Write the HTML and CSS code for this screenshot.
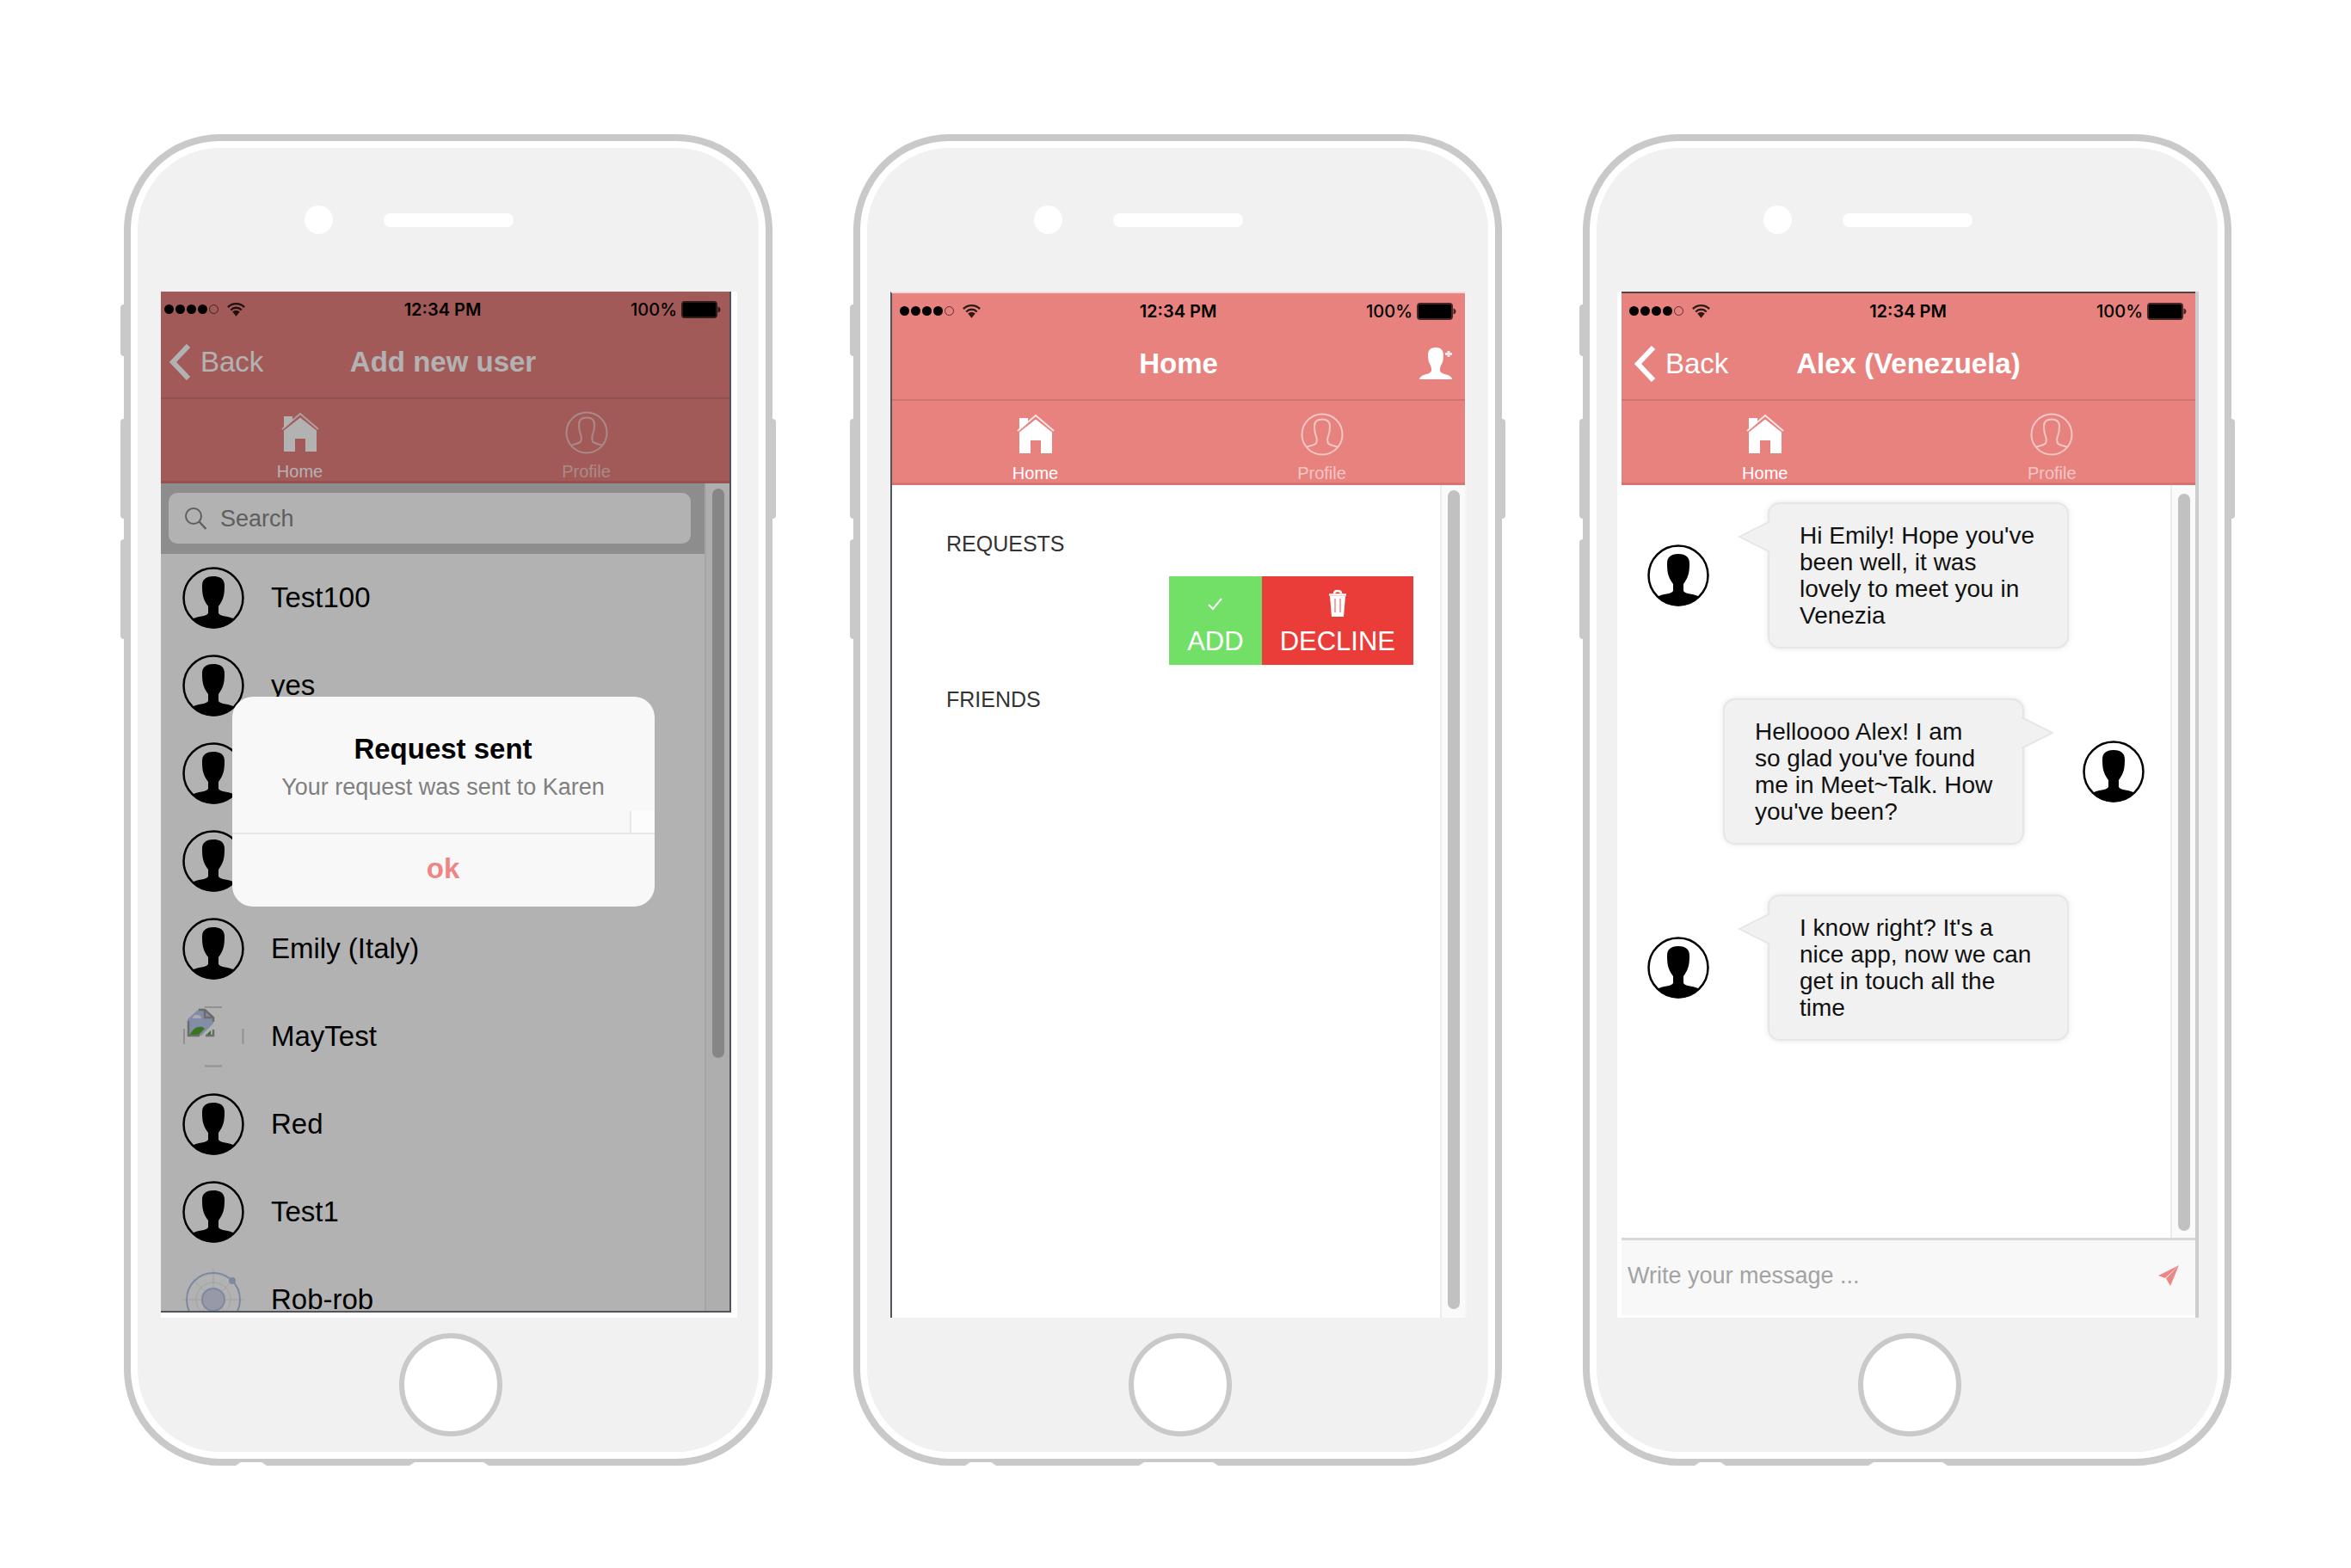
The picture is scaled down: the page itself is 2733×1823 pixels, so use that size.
FILE: index.html
```html
<!DOCTYPE html>
<html lang="en">
<head>
<meta charset="utf-8">
<title>Meet~Talk</title>
<link rel="stylesheet" href="styles.css">
</head>
<body>
<svg class="sprite" aria-hidden="true">
  <symbol id="wifi" viewBox="0 0 24 20">
    <path d="M2 7a14 14 0 0 1 20 0M5.500 10.500a9 9 0 0 1 13 0" fill="none" stroke="currentColor" stroke-width="2.500"/>
    <path d="M7.500 12.500a6.500 6.500 0 0 1 9 0L12 18z" fill="currentColor"/>
  </symbol>
  <symbol id="battery" viewBox="0 0 46 20">
    <rect x="1" y="1" width="40" height="18" rx="3" fill="none" stroke="currentColor" stroke-width="2" opacity=".7"/>
    <rect x="2" y="2" width="38" height="16" rx="1" fill="currentColor"/>
    <path d="M42.500 6.500q3 1 3 3.500t-3 3.500z" fill="currentColor" opacity=".7"/>
  </symbol>
  <symbol id="chevron" viewBox="0 0 26 42">
    <path d="M23 2 5 21l18 19" fill="none" stroke="currentColor" stroke-width="6"/>
  </symbol>
  <symbol id="home" viewBox="0 0 50 50">
    <path d="M6 6h10v5l-10 9z" fill="currentColor"/>
    <path d="M4 21 25 3l21 18" fill="none" stroke="currentColor" stroke-width="2" opacity=".8"/>
    <path d="M6 22.500 25 7.500l19 15V47H31V32H19v15H6z" fill="currentColor"/>
  </symbol>
  <symbol id="profile" viewBox="0 0 50 50">
    <g fill="none" stroke="currentColor" stroke-width="2">
      <circle cx="25" cy="25" r="23.500"/>
      <path d="M7 39.500c4-1 9-2 11-4 1-3 1-6 0-8-2-5-2-9-2-12 0-6 4-8 9-8s9 2 9 8c0 3 0 7-2 12-1 2-1 5 0 8 2 2 7 3 11 4"/>
    </g>
  </symbol>
  <symbol id="user-add" viewBox="0 0 40 40">
    <path d="M20 1c-7 0-9 4-9 9s1 9 3 12c1 2 1 4 1 6-1 4-8 4-11 6-2 1-3 3-3 4h38c0-1-1-3-3-4-3-2-10-2-11-6 0-2 0-4 1-6 2-3 3-7 3-12s-2-9-9-9z" fill="currentColor"/>
    <path d="M35 5v7M31 8.500h8" stroke="currentColor" stroke-width="3" fill="none" opacity=".8"/>
  </symbol>
  <symbol id="avatar" viewBox="0 0 72 72">
    <circle cx="36" cy="36" r="34.500" fill="#fff" stroke="#000" stroke-width="2.500"/>
    <path d="M36 11c-9 0-13 4-13 11 0 10 1 16 7 24v8c-2 4-12 3-19 7a35 35 0 0 0 50 0c-7-4-17-3-19-7v-8c6-8 7-14 7-24 0-7-4-11-13-11z"/>
  </symbol>
  <symbol id="magnifier" viewBox="0 0 28 28">
    <circle cx="11" cy="11" r="9" fill="none" stroke="currentColor" stroke-width="2"/>
    <path d="m17.500 17.500 8 8.500" stroke="currentColor" stroke-width="2.500"/>
  </symbol>
  <symbol id="missing" viewBox="0 0 72 72">
    <path d="M26 2h20M26 70.500h20M2 27v18M70.500 27v18" fill="none" stroke="#d0d0d0" stroke-width="2"/>
    <path d="M6 35V16L18 5h8l10 11v5L22 35z" fill="#bccbec"/>
    <path d="M12 15q0-4 5-4t5 4z" fill="#f2f5fc"/>
    <path d="M8 35c4-8 9-11 15-10l3 2-8 8z" fill="#51a82f"/>
    <path d="m28 34 5-5v5z" fill="#51a82f"/>
    <path d="M7 18v17h13M27 35h9v-7M19 5h7l10 9v5M26 5v9h9" fill="none" stroke="#9b9b9b" stroke-width="2.500"/>
  </symbol>
  <symbol id="sketch" viewBox="0 0 72 72">
    <g fill="none" stroke="#a3a7b3" stroke-width="1" opacity=".25">
      <path d="M36 0v72M0 36h72M12 12l48 48M60 12 12 60"/><circle cx="36" cy="36" r="20"/>
    </g>
    <circle cx="36" cy="36" r="31" fill="none" stroke="#b3c5ea" stroke-width="2"/>
    <circle cx="36" cy="36" r="13" fill="#d9ddee" stroke="#b3c5ea" stroke-width="2"/>
    <circle cx="58" cy="14" r="4" fill="#b3c5ea"/>
  </symbol>
  <symbol id="check" viewBox="0 0 34 34">
    <path d="m9 18 5 5L24 11" fill="none" stroke="currentColor" stroke-width="2"/>
  </symbol>
  <symbol id="trash" viewBox="0 0 34 34">
    <path d="M13 5q0-3 4-3t4 3M7 6.500h20" fill="none" stroke="currentColor" stroke-width="2.500"/>
    <path d="M8 8h18l-2 24H10z" fill="currentColor"/>
    <path d="M14 11v16M20 11v16" stroke="#f6a3a1" stroke-width="2"/>
  </symbol>
  <symbol id="send" viewBox="0 0 26 26">
    <path d="M25 1 1 13l8 3z" fill="currentColor"/>
    <path d="M25 1 10 16.500 15 25z" fill="currentColor"/>
  </symbol>
</svg>

<main class="gallery">

  <section class="phone">
    <span class="key key-mute"></span><span class="key key-up"></span><span class="key key-down"></span><span class="key key-power"></span>
    <span class="port port-jack"></span><span class="port port-dock"></span>
    <div class="face">
      <div class="forehead"><span class="camera"></span><span class="speaker"></span></div>
      <div class="screen screen-add">
        <div class="app">
          <header class="header">
            <div class="status">
              <span class="signal"><i></i><i></i><i></i><i></i><i class="off"></i><svg class="wifi"><use href="#wifi"/></svg></span>
              <span class="time">12:34 PM</span>
              <span class="power">100%<svg class="battery"><use href="#battery"/></svg></span>
            </div>
            <div class="navbar">
              <button class="back"><svg><use href="#chevron"/></svg>Back</button>
              <h1>Add new user</h1>
            </div>
          </header>
          <nav class="tabs">
            <a href="#" class="tab active"><svg><use href="#home"/></svg>Home</a>
            <a href="#" class="tab"><svg><use href="#profile"/></svg>Profile</a>
          </nav>
          <div class="content">
            <div class="pane">
              <div class="searchbar">
                <label class="search"><svg><use href="#magnifier"/></svg><input type="search" placeholder="Search" aria-label="Search"></label>
              </div>
              <ul class="users">
                <li><svg><use href="#avatar"/></svg>Test100</li>
                <li><svg><use href="#avatar"/></svg>yes</li>
                <li><svg><use href="#avatar"/></svg></li>
                <li><svg><use href="#avatar"/></svg></li>
                <li><svg><use href="#avatar"/></svg>Emily (Italy)</li>
                <li><svg><use href="#missing"/></svg>MayTest</li>
                <li><svg><use href="#avatar"/></svg>Red</li>
                <li><svg><use href="#avatar"/></svg>Test1</li>
                <li><svg><use href="#sketch"/></svg>Rob-rob</li>
              </ul>
            </div>
            <div class="track"><span class="thumb thumb-long-list"></span></div>
          </div>
          <div class="backdrop">
            <div class="popup" role="dialog" aria-labelledby="popup-title">
              <div class="popup-body">
                <h2 id="popup-title">Request sent</h2>
                <p>Your request was sent to Karen</p>
                <span class="corner"></span>
              </div>
              <button class="popup-ok">ok</button>
            </div>
          </div>
        </div>
      </div>
      <div class="chin"><span class="home-button"></span></div>
    </div>
  </section>

  <section class="phone">
    <span class="key key-mute"></span><span class="key key-up"></span><span class="key key-down"></span><span class="key key-power"></span>
    <span class="port port-jack"></span><span class="port port-dock"></span>
    <div class="face">
      <div class="forehead"><span class="camera"></span><span class="speaker"></span></div>
      <div class="screen screen-home">
        <div class="app">
          <header class="header">
            <div class="status">
              <span class="signal"><i></i><i></i><i></i><i></i><i class="off"></i><svg class="wifi"><use href="#wifi"/></svg></span>
              <span class="time">12:34 PM</span>
              <span class="power">100%<svg class="battery"><use href="#battery"/></svg></span>
            </div>
            <div class="navbar">
              <h1>Home</h1>
              <button class="add-user" aria-label="Add user"><svg><use href="#user-add"/></svg></button>
            </div>
          </header>
          <nav class="tabs">
            <a href="#" class="tab active"><svg><use href="#home"/></svg>Home</a>
            <a href="#" class="tab"><svg><use href="#profile"/></svg>Profile</a>
          </nav>
          <div class="content">
            <div class="pane lists">
              <h2>REQUESTS</h2>
              <div class="actions">
                <button class="action add"><svg><use href="#check"/></svg>ADD</button>
                <button class="action decline"><svg><use href="#trash"/></svg>DECLINE</button>
              </div>
              <h2>FRIENDS</h2>
            </div>
            <div class="track"><span class="thumb"></span></div>
          </div>
        </div>
      </div>
      <div class="chin"><span class="home-button"></span></div>
    </div>
  </section>

  <section class="phone">
    <span class="key key-mute"></span><span class="key key-up"></span><span class="key key-down"></span><span class="key key-power"></span>
    <span class="port port-jack"></span><span class="port port-dock"></span>
    <div class="face">
      <div class="forehead"><span class="camera"></span><span class="speaker"></span></div>
      <div class="screen screen-chat">
        <div class="app">
          <header class="header">
            <div class="status">
              <span class="signal"><i></i><i></i><i></i><i></i><i class="off"></i><svg class="wifi"><use href="#wifi"/></svg></span>
              <span class="time">12:34 PM</span>
              <span class="power">100%<svg class="battery"><use href="#battery"/></svg></span>
            </div>
            <div class="navbar">
              <button class="back"><svg><use href="#chevron"/></svg>Back</button>
              <h1>Alex (Venezuela)</h1>
            </div>
          </header>
          <nav class="tabs">
            <a href="#" class="tab active"><svg><use href="#home"/></svg>Home</a>
            <a href="#" class="tab"><svg><use href="#profile"/></svg>Profile</a>
          </nav>
          <div class="content">
            <div class="pane chat">
              <div class="message">
                <svg class="face-icon"><use href="#avatar"/></svg>
                <p class="bubble"><svg class="tail" viewBox="0 0 38 38"><path d="M38 1 2 19l36 18"/></svg>Hi Emily! Hope you've been well, it was lovely to meet you in Venezia</p>
              </div>
              <div class="message mine">
                <svg class="face-icon"><use href="#avatar"/></svg>
                <p class="bubble"><svg class="tail" viewBox="0 0 38 38"><path d="m0 1 36 18L0 37"/></svg>Helloooo Alex! I am so glad you've found me in Meet~Talk. How you've been?</p>
              </div>
              <div class="message">
                <svg class="face-icon"><use href="#avatar"/></svg>
                <p class="bubble"><svg class="tail" viewBox="0 0 38 38"><path d="M38 1 2 19l36 18"/></svg>I know right? It's a nice app, now we can get in touch all the time</p>
              </div>
            </div>
            <div class="track"><span class="thumb"></span></div>
          </div>
          <form class="composer">
            <input type="text" placeholder="Write your message ..." aria-label="Write your message">
            <button type="button" aria-label="Send"><svg><use href="#send"/></svg></button>
          </form>
        </div>
      </div>
      <div class="chin"><span class="home-button"></span></div>
    </div>
  </section>

</main>
</body>
</html>
```

FILE: styles.css
```css
* { box-sizing: border-box; }

body {
  margin: 0;
  background: #fff;
  color: #000;
  font-family: "Liberation Sans", Arial, sans-serif;
}

h1, h2, p, ul { margin: 0; padding: 0; }
svg { display: block; flex: none; }
button, input {
  margin: 0;
  padding: 0;
  border: 0;
  background: none;
  color: inherit;
  font: inherit;
  outline: 0;
}
.sprite { position: absolute; width: 0; height: 0; }

.gallery {
  display: grid;
  grid-template-columns: repeat(3, 1fr);
  gap: 94px;
  padding: 156px 139px 119px 144px;
}

/* Device frame */
.phone {
  position: relative;
  display: flex;
  aspect-ratio: 754 / 1548;
  min-height: 0;
  padding: 8px;
  border: 8px solid #c9c9c9;
  border-radius: 112px;
}
.face {
  display: flex;
  flex-direction: column;
  flex: 1;
  min-width: 0;
  min-height: 0;
  border-radius: 96px;
  background: #f1f1f1;
}
.key {
  position: absolute;
  left: -12px;
  width: 4px;
  height: 116px;
  border-radius: 4px 0 0 4px;
  background: #c9c9c9;
}
.key-mute { top: 190px; height: 60px; }
.key-up { top: 323px; }
.key-down { top: 463px; }
.key-power { top: 323px; left: auto; right: -12px; border-radius: 0 4px 4px 0; }
.port {
  position: absolute;
  bottom: -8px;
  height: 4px;
  background: #fff;
  clip-path: polygon(0 100%, 6px 0, calc(100% - 6px) 0, 100% 100%);
}
.port-jack { left: 122px; width: 36px; }
.port-dock { left: 324px; width: 92px; }

.forehead {
  display: flex;
  align-items: center;
  gap: 59px;
  height: 167px;
  padding-left: 194px;
}
.camera { width: 33px; height: 33px; border-radius: 50%; background: #fff; }
.speaker { width: 151px; height: 16px; border-radius: 8px; background: #fff; }
.chin {
  display: flex;
  align-items: center;
  justify-content: center;
  height: 156px;
  padding-left: 6px;
}
.home-button {
  width: 120px;
  height: 120px;
  border: 6px solid #c9c9c9;
  border-radius: 50%;
  background: #fff;
}

.screen {
  display: flex;
  flex: 1;
  min-height: 0;
  margin: 0 25px 0 27px;
  background: #fff;
  overflow: hidden;
}
.screen-add { padding: 0 7px 6px 0; }
.screen-add .app {
  margin-left: -5px;
  border-right: 2px solid #50545c;
  border-bottom: 2px solid #50545c;
}
.screen-home {
  border-top: 2px solid #f5d8d7;
  border-left: 2px solid #50545c;
  border-right: 2px solid #f5f5f5;
}
.screen-chat {
  margin: 0 22px 0 24px;
  padding: 0 0 3px 5px;
  border-right: 4px solid #cdcdcd;
}
.screen-chat .app { border-top: 2px solid #50434a; }

/* App shell */
.app {
  position: relative;
  display: flex;
  flex-direction: column;
  flex: 1;
  min-width: 0;
  background: #fff;
}
.header {
  flex: none;
  border-bottom: 2px solid #d07472;
  background: #e8827f;
  color: #fff;
}
.status {
  display: grid;
  grid-template-columns: 1fr auto 1fr;
  align-items: center;
  height: 41px;
  padding: 0 10px 0 9px;
  color: #000;
  font: 600 20px/24px Inter, sans-serif;
}
.signal, .power { display: flex; align-items: center; }
.signal { gap: 2px; }
.signal i { width: 11px; height: 11px; border-radius: 50%; background: #000; }
.signal .off { border: 1px solid #000; background: none; opacity: 0.6; }
.wifi { width: 23px; height: 20px; margin-left: 7px; opacity: 0.8; }
.power { justify-content: flex-end; gap: 5px; font-weight: 500; }
.battery { width: 46px; height: 20px; }
.navbar {
  display: grid;
  grid-template-columns: 1fr auto 1fr;
  align-items: center;
  height: 82px;
}
.navbar h1 { grid-column: 2; font-size: 33px; line-height: 38px; }
.back {
  display: flex;
  align-items: center;
  gap: 11px;
  padding-left: 14px;
  font-size: 33px;
  line-height: 38px;
}
.back svg { width: 26px; height: 42px; }
.add-user { justify-self: end; padding-right: 14px; }
.add-user svg { width: 40px; height: 40px; }

.tabs {
  display: grid;
  grid-template-columns: 1fr 1fr;
  flex: none;
  height: 98px;
  border-bottom: 3px solid #d57573;
  background: #e8827f;
}
.tab {
  display: flex;
  flex-direction: column;
  align-items: center;
  gap: 9px;
  padding-top: 14px;
  color: #f4c6c5;
  font-size: 20px;
  line-height: 22px;
  text-decoration: none;
}
.tab.active { color: #fff; }
.tab svg { width: 50px; height: 50px; }

.content { display: flex; flex: 1; min-height: 0; overflow: hidden; }
.pane { flex: 1; min-width: 0; }
.track {
  display: flex;
  flex: none;
  width: 29px;
  padding: 6px 6px 10px 7px;
  border-left: 2px solid #ececec;
  background: #fafafa;
}
.thumb { flex: 1; border-radius: 8px; background: #c1c1c1; }
.thumb-long-list { height: 70%; }

/* Add new user */
.searchbar { padding: 11px 16px 12px 14px; background: #cbcbcb; }
.search {
  display: flex;
  align-items: center;
  gap: 14px;
  height: 59px;
  padding: 0 18px;
  border-radius: 10px;
  background: #fff;
  color: #888;
}
.search svg { width: 28px; height: 28px; }
.search input { flex: 1; min-width: 0; font-size: 27px; line-height: 32px; }
.search input::placeholder { color: #888; opacity: 1; }
.users { list-style: none; }
.users li {
  display: flex;
  align-items: center;
  gap: 31px;
  height: 102px;
  padding-left: 30px;
  font-size: 33px;
}
.users svg { width: 72px; height: 72px; }

.backdrop {
  position: absolute;
  inset: 0;
  display: flex;
  align-items: center;
  justify-content: center;
  background: rgba(0, 0, 0, 0.3);
}
.popup {
  width: 491px;
  border-radius: 24px;
  background: #f8f8f8;
  text-align: center;
  overflow: hidden;
}
.popup-body {
  position: relative;
  padding: 42px 24px 37px;
  border-bottom: 2px solid #e6e6e6;
}
.popup h2 { font-size: 33px; line-height: 38px; }
.popup p { margin-top: 10px; color: #808080; font-size: 27px; line-height: 31px; }
.corner {
  position: absolute;
  right: 0;
  bottom: 0;
  width: 29px;
  height: 25px;
  border-left: 2px solid #e6e6e6;
  background: #fcfcfc;
}
.popup-ok {
  width: 100%;
  height: 84px;
  padding-bottom: 4px;
  color: #ec8785;
  font-size: 33px;
  font-weight: bold;
}

/* Home */
.lists { padding: 53px 31px 0 63px; }
.lists h2 { color: #333; font-size: 25px; font-weight: normal; line-height: 30px; }
.actions { display: flex; justify-content: flex-end; margin: 23px 0 25px; }
.action {
  display: flex;
  flex-direction: column;
  align-items: center;
  gap: 9px;
  height: 103px;
  padding: 15px 21px 9px;
  color: #fff;
  font-size: 31px;
  line-height: 36px;
}
.action svg { width: 34px; height: 34px; }
.add { background: #72e067; }
.decline { background: #ea3d39; }

/* Chat */
.chat {
  display: flex;
  flex-direction: column;
  gap: 58px;
  padding: 20px 30px;
}
.message { display: flex; align-items: center; gap: 68px; }
.mine { flex-direction: row-reverse; }
.face-icon { width: 72px; height: 72px; }
.bubble {
  position: relative;
  width: 350px;
  padding: 21px 33px 21px 35px;
  border: 2px solid #e6e6e6;
  border-radius: 14px;
  background: #f1f1f1;
  box-shadow: 0 0 6px rgba(0, 0, 0, 0.1);
  color: #111;
  font-size: 28px;
  line-height: 31px;
}
.tail {
  position: absolute;
  top: 19px;
  right: 100%;
  width: 38px;
  height: 38px;
  margin-right: -1px;
  fill: #f1f1f1;
  stroke: #e6e6e6;
  stroke-width: 2;
}
.mine .tail { right: auto; left: 100%; margin: 0 0 0 -1px; }
.screen-chat .track { padding-top: 10px; padding-bottom: 8px; }

.composer {
  display: flex;
  align-items: center;
  flex: none;
  height: 90px;
  padding: 0 18px 6px 7px;
  border-top: 3px solid #d8d8d8;
  background: #f8f8f8;
}
.composer input { flex: 1; min-width: 0; font-size: 27px; line-height: 32px; }
.composer input::placeholder { color: #a3a3a3; opacity: 1; }
.composer button { color: #ec8785; }
.composer svg { width: 26px; height: 26px; }
```
